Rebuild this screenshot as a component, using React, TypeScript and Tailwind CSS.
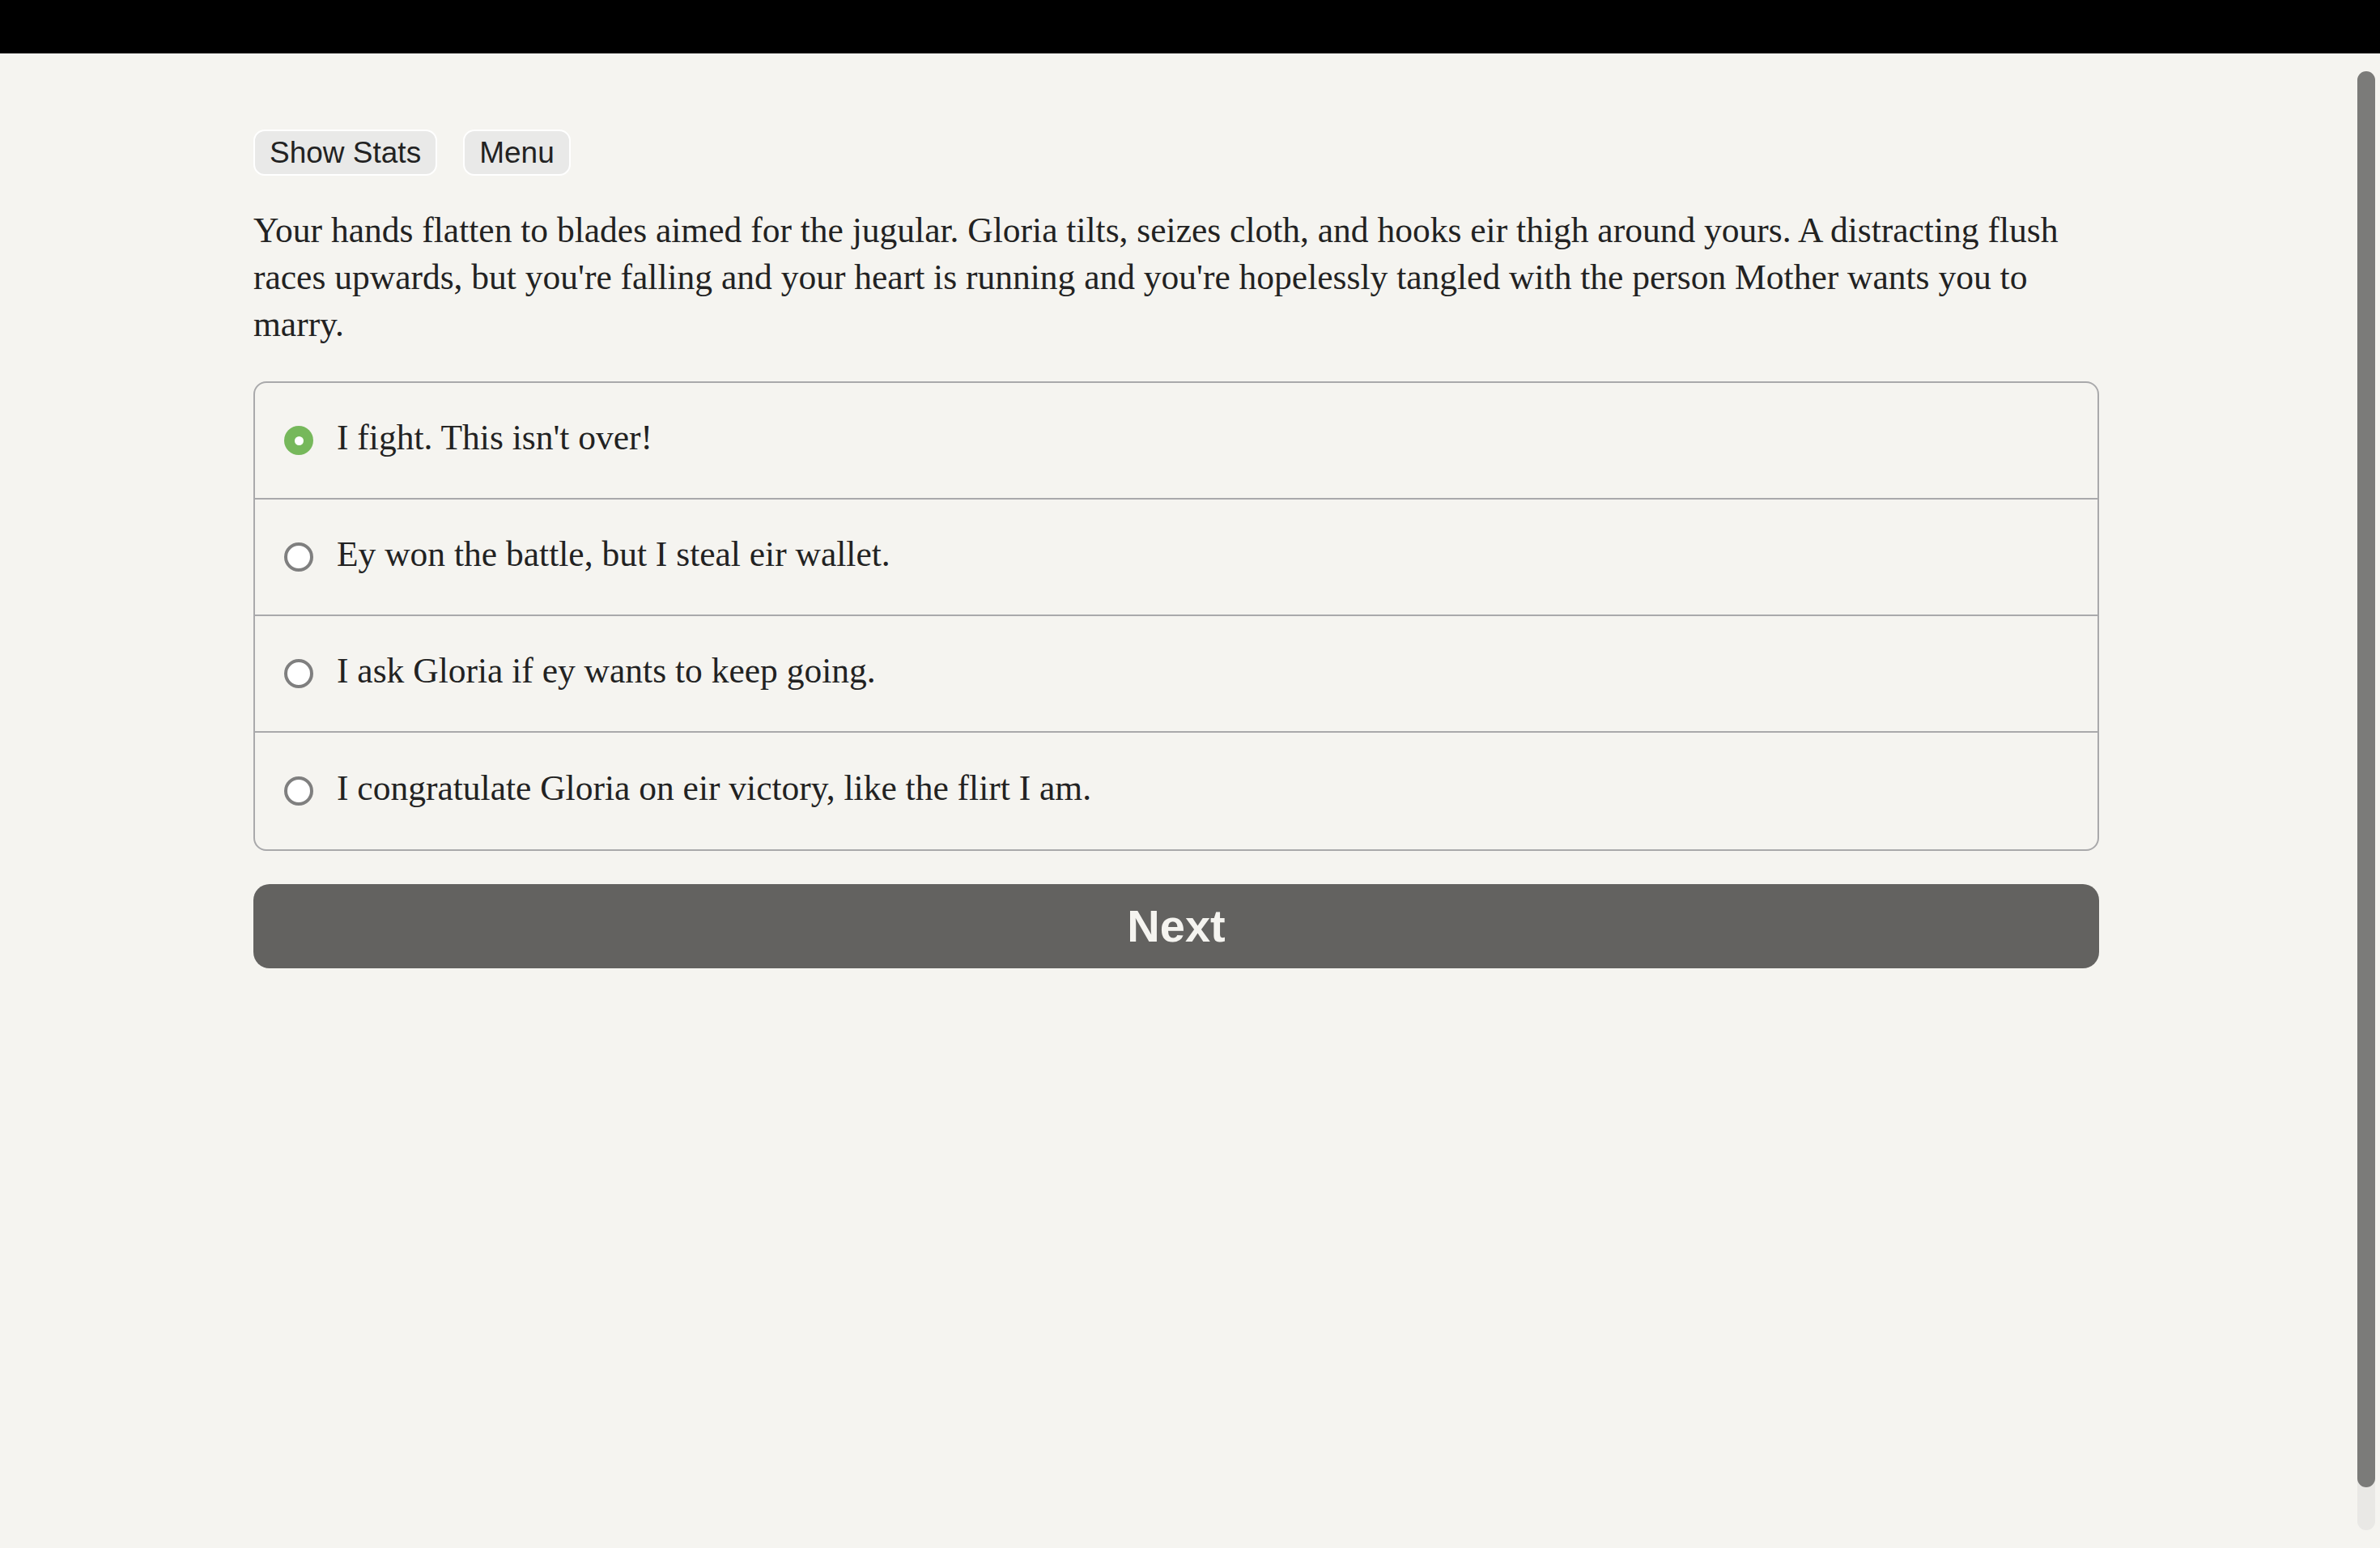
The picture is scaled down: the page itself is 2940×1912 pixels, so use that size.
import React, { useState } from "react";

const choices = [
  "I fight. This isn't over!",
  "Ey won the battle, but I steal eir wallet.",
  "I ask Gloria if ey wants to keep going.",
  "I congratulate Gloria on eir victory, like the flirt I am.",
];

const App = () => {
  // Selected option
  const [selected, setSelected] = useState(0);

  return (
    <div className="min-h-screen bg-[#f5f4f0] font-['Liberation_Serif',serif] text-[#222]">
      {/* Top strip */}
      <div className="h-[66px] w-full bg-black" />

      <main className="w-[2280px] ml-[313px] pt-[94px]">
        {/* Header buttons */}
        <div className="flex gap-[32px]">
          <button className="h-[57px] px-[18px] rounded-[14px] border-2 border-white bg-[#e9e9e8] font-['Liberation_Sans',sans-serif] text-[37px] leading-none text-[#222]">
            Show Stats
          </button>
          <button className="h-[57px] px-[18px] rounded-[14px] border-2 border-white bg-[#e9e9e8] font-['Liberation_Sans',sans-serif] text-[37px] leading-none text-[#222]">
            Menu
          </button>
        </div>

        {/* Story text */}
        <p className="mt-[38px] text-[43.5px] leading-[58px]">
          Your hands flatten to blades aimed for the jugular. Gloria tilts,
          seizes cloth, and hooks eir thigh around yours. A distracting flush
          races upwards, but you're falling and your heart is running and
          you're hopelessly tangled with the person Mother wants you to marry.
        </p>

        {/* Choices */}
        <div className="mt-[42px] rounded-[16px] border-2 border-[#a9a9ab] divide-y-2 divide-[#a9a9ab]">
          {choices.map((text, i) => (
            <div
              key={i}
              onClick={() => setSelected(i)}
              className="flex h-[144px] items-center gap-[29px] pl-[36px] cursor-pointer"
            >
              {selected === i ? (
                <span className="flex h-[36px] w-[36px] shrink-0 items-center justify-center rounded-full bg-[#76b85b]">
                  <span className="h-[11px] w-[11px] rounded-full bg-white" />
                </span>
              ) : (
                <span className="h-[36px] w-[36px] shrink-0 rounded-full border-[4px] border-[#7f7f7f] bg-white" />
              )}
              <span className="-mt-2 text-[43.5px] leading-[58px]">{text}</span>
            </div>
          ))}
        </div>

        {/* Submit */}
        <button className="mt-[41px] h-[104px] w-full rounded-[20px] bg-[#636260] font-['Liberation_Sans',sans-serif] text-[56px] font-bold text-[#f5f4f0]">
          Next
        </button>
      </main>

      {/* Overlay scrollbar */}
      <div className="fixed right-[6px] top-[88px] h-[1802px] w-[22px] rounded-full bg-[#e9e8e5]">
        <div className="h-[1749px] w-full rounded-full bg-[#7b7b79]" />
      </div>
    </div>
  );
};

export default App;
